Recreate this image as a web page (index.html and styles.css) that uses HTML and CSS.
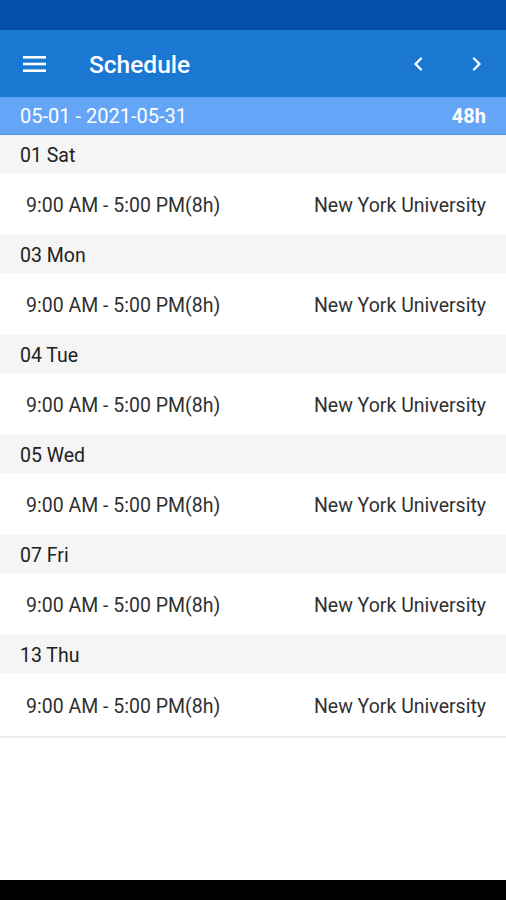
FILE: index.html
```html
<!DOCTYPE html>
<html lang="en">
<head>
    <meta charset="UTF-8">
    <meta name="viewport" content="width=device-width, initial-scale=1.0">
    <title>Schedule</title>
    <link rel="stylesheet" href="styles.css">
</head>
<body>
    <div class="status-bar"></div>

    <header class="app-bar">
        <button class="icon-btn menu-btn" aria-label="Menu">
            <svg width="24" height="18" viewBox="0 0 24 18">
                <rect x="0" y="1" width="23" height="2.6" fill="#fff"/>
                <rect x="0" y="7.7" width="23" height="2.6" fill="#fff"/>
                <rect x="0" y="14.4" width="23" height="2.6" fill="#fff"/>
            </svg>
        </button>
        <h1 class="title">Schedule</h1>
        <div class="nav">
            <button class="icon-btn" aria-label="Previous">
                <svg width="12" height="14" viewBox="0 0 12 14">
                    <path d="M9 1.5 L3.5 7 L9 12.5" fill="none" stroke="#fff" stroke-width="2.4" stroke-linecap="round" stroke-linejoin="round"/>
                </svg>
            </button>
            <button class="icon-btn" aria-label="Next">
                <svg width="12" height="14" viewBox="0 0 12 14">
                    <path d="M3 1.5 L8.5 7 L3 12.5" fill="none" stroke="#fff" stroke-width="2.4" stroke-linecap="round" stroke-linejoin="round"/>
                </svg>
            </button>
        </div>
    </header>

    <div class="range-bar">
        <span>05-01 - 2021-05-31</span>
        <span class="total">48h</span>
    </div>

    <main class="schedule">
        <div class="day-header">01 Sat</div>
        <div class="shift">
            <span>9:00 AM - 5:00 PM(8h)</span>
            <span>New York University</span>
        </div>

        <div class="day-header">03 Mon</div>
        <div class="shift">
            <span>9:00 AM - 5:00 PM(8h)</span>
            <span>New York University</span>
        </div>

        <div class="day-header">04 Tue</div>
        <div class="shift">
            <span>9:00 AM - 5:00 PM(8h)</span>
            <span>New York University</span>
        </div>

        <div class="day-header">05 Wed</div>
        <div class="shift">
            <span>9:00 AM - 5:00 PM(8h)</span>
            <span>New York University</span>
        </div>

        <div class="day-header">07 Fri</div>
        <div class="shift">
            <span>9:00 AM - 5:00 PM(8h)</span>
            <span>New York University</span>
        </div>

        <div class="day-header">13 Thu</div>
        <div class="shift last">
            <span>9:00 AM - 5:00 PM(8h)</span>
            <span>New York University</span>
        </div>
    </main>

    <div class="nav-bar"></div>
</body>
</html>
```

FILE: styles.css
```css
body {
    margin: 0;
    padding: 0;
    font-family: Roboto, 'Liberation Sans', sans-serif;
    background: #fff;
    color: #212121;
    height: 900px;
    display: flex;
    flex-direction: column;
    overflow: hidden;
}

.status-bar {
    height: 30px;
    background: #0450a8;
}

.app-bar {
    height: 67px;
    background: #1a77d2;
    display: flex;
    align-items: center;
    color: white;
}

.icon-btn {
    background: none;
    border: none;
    padding: 0;
    cursor: pointer;
    display: flex;
    align-items: center;
    justify-content: center;
}

.menu-btn {
    margin-left: 23px;
    width: 24px;
}

.title {
    margin: 2px 0 0 42px;
    font-size: 24.5px;
    font-weight: 500;
    flex: 1;
}

.nav {
    display: flex;
    gap: 47px;
    margin-right: 23px;
}

.nav .icon-btn {
    width: 12px;
}

.range-bar {
    height: 38px;
    box-sizing: border-box;
    background: #64a5f8;
    border-bottom: 1px solid #5592e2;
    color: white;
    font-size: 20px;
    display: flex;
    align-items: center;
    justify-content: space-between;
    padding: 1px 20px 0;
}

.range-bar .total {
    font-weight: bold;
}

.schedule {
    flex: 1;
}

.day-header {
    height: 38px;
    box-sizing: border-box;
    background: #f5f5f5;
    font-size: 19.5px;
    display: flex;
    align-items: center;
    padding: 2px 0 0 20px;
}

.shift {
    height: 62px;
    box-sizing: border-box;
    display: flex;
    align-items: center;
    justify-content: space-between;
    padding: 3px 20px 0 26px;
    font-size: 19.5px;
    color: #303030;
}

.shift.last {
    height: 65px;
    border-bottom: 2px solid #ececec;
}

.nav-bar {
    height: 20px;
    background: #000;
}
```
